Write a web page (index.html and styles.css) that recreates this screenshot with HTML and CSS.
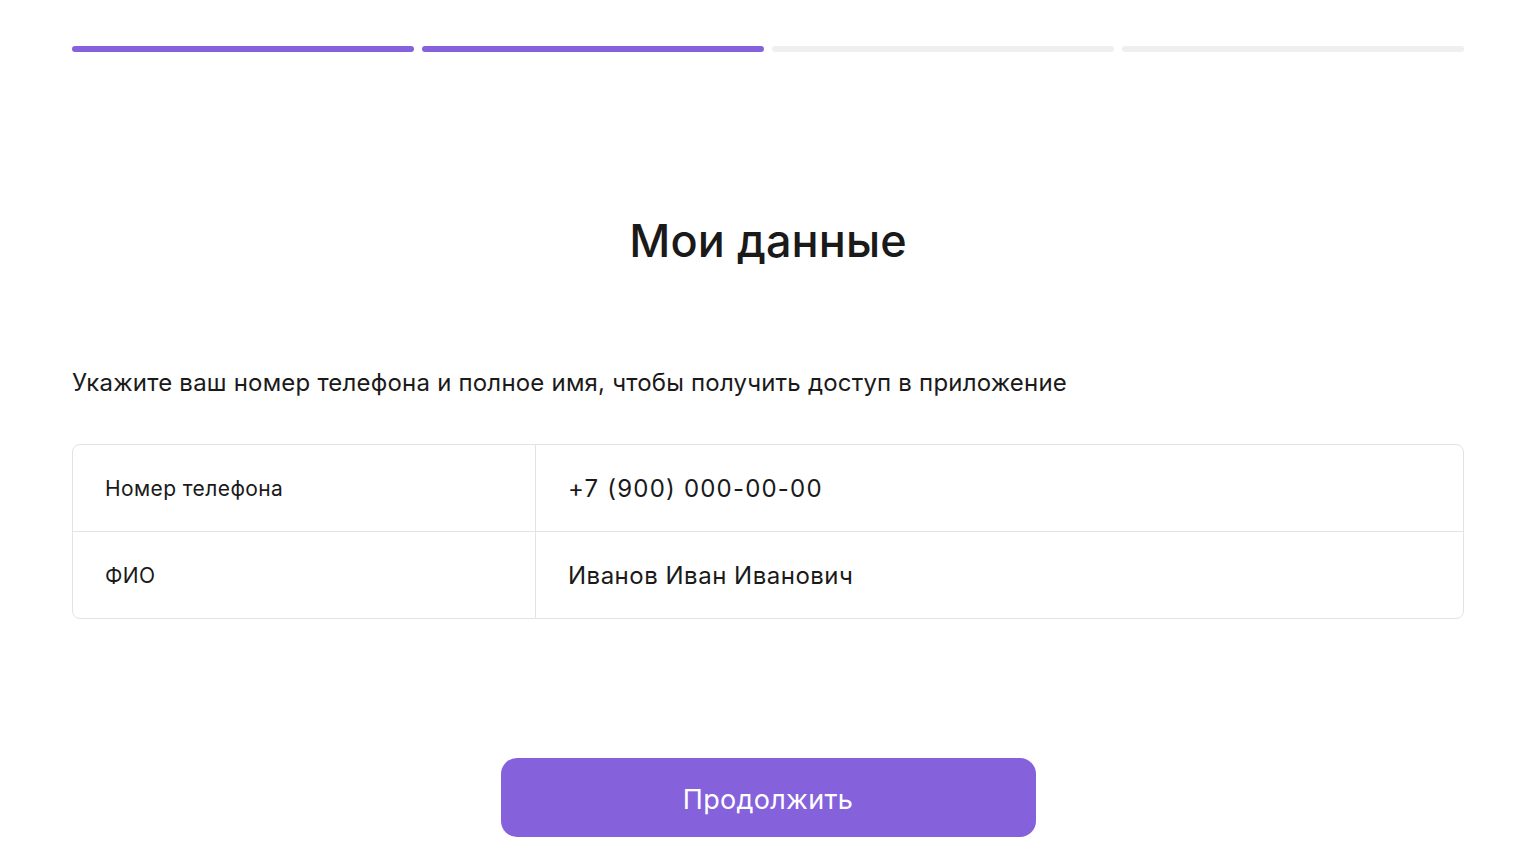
FILE: index.html
```html
<!DOCTYPE html>
<html lang="ru">
<head>
<meta charset="utf-8">
<title>Мои данные</title>
<link rel="stylesheet" href="styles.css">
</head>
<body>
<div class="page">
  <div class="progress">
    <div class="seg active"></div>
    <div class="seg active"></div>
    <div class="seg"></div>
    <div class="seg"></div>
  </div>
  <h1 class="title">Мои данные</h1>
  <p class="lead">Укажите ваш номер телефона и полное имя, чтобы получить доступ в приложение</p>
  <div class="form">
    <div class="row">
      <div class="label">Номер телефона</div>
      <div class="value phone">+7 (900) 000-00-00</div>
    </div>
    <div class="row">
      <div class="label">ФИО</div>
      <div class="value">Иванов Иван Иванович</div>
    </div>
  </div>
  <div class="actions">
    <button class="btn">Продолжить</button>
  </div>
</div>
</body>
</html>
```
FILE: styles.css
```css
* { box-sizing: border-box; }
html, body { margin: 0; padding: 0; background: #fff; }
body {
  font-family: Inter, "Noto Sans", sans-serif;
  color: #1a1a1a;
}
.page {
  width: 1392px;
  margin-left: 72px;
  padding-top: 46px;
  display: flex;
  flex-direction: column;
}
.progress {
  display: flex;
  gap: 8px;
}
.seg {
  flex: 1;
  height: 6px;
  border-radius: 3px;
  background: #efefef;
}
.seg.active { background: #8562dc; }
.title {
  margin: 161px 0 0;
  text-align: center;
  font-size: 45px;
  font-weight: 500;
  line-height: 56px;
  letter-spacing: 0.1px;
}
.lead {
  margin: 99px 0 0;
  font-size: 24px;
  line-height: 30px;
  font-weight: 400;
  letter-spacing: 0.2px;
}
.form {
  margin-top: 46px;
  border: 1.5px solid #e3e3e3;
  border-radius: 8px;
  display: flex;
  flex-direction: column;
}
.row {
  display: flex;
  height: 86px;
}
.row + .row { border-top: 1.5px solid #e3e3e3; height: 87px; }
.label {
  width: 463px;
  border-right: 1.5px solid #e3e3e3;
  padding-left: 32px;
  display: flex;
  align-items: center;
  font-size: 21px;
  letter-spacing: 0.4px;
}
.value {
  flex: 1;
  padding-left: 32px;
  display: flex;
  align-items: center;
  font-size: 24px;
  letter-spacing: 0.5px;
}
.value.phone { letter-spacing: 1.2px; }
.actions {
  margin-top: 139px;
  display: flex;
  justify-content: center;
}
.btn {
  width: 535px;
  height: 79px;
  border: none;
  border-radius: 16px;
  background: #8562dc;
  color: #fff;
  font-family: inherit;
  font-size: 27px;
  font-weight: 400;
  letter-spacing: 0.3px;
  padding: 4px 0 0;
}
```
